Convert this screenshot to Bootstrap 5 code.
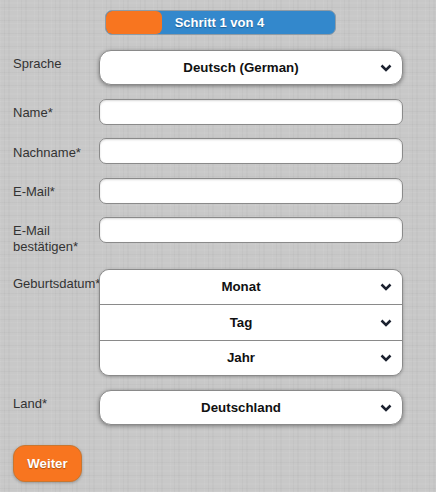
<!DOCTYPE html>
<html lang="de">
<head>
<meta charset="utf-8">
<title>Schritt 1 von 4</title>
<link href="https://cdn.jsdelivr.net/npm/bootstrap@5.3.0/dist/css/bootstrap.min.css" rel="stylesheet">
<style>
html,body{height:100%}
body{margin:0;font-family:"Liberation Sans",Arial,sans-serif;font-size:13px;color:#333;overflow:hidden;
 background-color:#c8c8c8;
 background-image:
  repeating-linear-gradient(0deg,rgba(255,255,255,.05) 0 1px,transparent 1px 3px,rgba(0,0,0,.025) 3px 4px,transparent 4px 7px,rgba(255,255,255,.04) 7px 9px,transparent 9px 13px),
  repeating-linear-gradient(90deg,rgba(255,255,255,.05) 0 1px,transparent 1px 4px,rgba(0,0,0,.025) 4px 5px,transparent 5px 8px,rgba(0,0,0,.02) 8px 10px,transparent 10px 17px);}
.wiz{padding:10px 33px 0 13px;height:492px}
.stepbar{width:231px;height:25px;margin:0 0 15px 92px;background:#3388cc;border:1px solid #8f9ba5;border-radius:7px;overflow:hidden;position:relative}
.stepfill{position:absolute;left:0;top:0;bottom:0;width:56px;background:#f8751f;border-radius:6px}
.steptext{position:relative;display:block;text-align:center;font-weight:700;font-size:13px;line-height:24px;color:#fff;text-shadow:0 1px 1px #1f5f94;padding-right:2px}
.frow{display:flex;align-items:flex-start}
.flabel{flex:0 0 86px;min-width:0;font-size:13px;line-height:18px;color:#333;white-space:nowrap}
.fctl{flex:0 0 304px}
.txtin{display:block;width:100%;height:26px;background:#fff;border:1px solid #8a8a8a;border-radius:7px;box-shadow:0 1px 2px rgba(0,0,0,.15) inset}
.selbtn{display:flex;align-items:center;justify-content:center;position:relative;width:100%;background:#fff;border:1px solid #8a8a8a;font-weight:700;font-size:13.3px;color:#111;padding-right:20px}
.selbtn svg{position:absolute;right:10px;top:50%;margin-top:-4px}
.solo{height:35px;border-radius:12px;box-shadow:0 1px 4px rgba(0,0,0,.4)}
.stack{border-radius:10px;overflow:hidden;border:1px solid #8a8a8a;box-shadow:0 1px 3px rgba(0,0,0,.25)}
.stack .selbtn{height:36px;border:0;border-top:1px solid #8a8a8a}
.stack .selbtn:first-child{border-top:0;height:34px}
.stack .selbtn:last-child{height:35px}
.gobtn{display:block;width:69px;height:37px;padding:0;margin-top:20px;background:#f8751f;border:1px solid #c9762f;border-radius:12px;color:#fff;font-weight:700;font-size:13.3px;line-height:35px;text-shadow:0 1px 1px #a8500f;box-shadow:0 1px 3px rgba(0,0,0,.25)}
.gap-a{margin-bottom:14px}.gap-b{margin-bottom:13px}.gap-c{margin-bottom:14px}.gap-d{margin-bottom:13px}.gap-e{margin-bottom:14px}.gap-f{margin-bottom:14px}
.lab-sel{padding-top:5px}.lab-txt{padding-top:5px}.lab-next{padding-top:6px}
.lab-two{padding-top:6px;line-height:16px;white-space:normal}
.lab-date{padding-top:6px}
</style>
</head>
<body>
<svg width="0" height="0" class="d-block" style="position:absolute" aria-hidden="true"><defs><symbol id="chev" viewBox="0 0 12 8"><path d="M1.5 1.5 6 6l4.500-4.500" fill="none" stroke="#1c2230" stroke-width="2.500"/></symbol></defs></svg>
<main class="wiz">
  <div class="stepbar"><div class="stepfill"></div><span class="steptext">Schritt 1 von 4</span></div>
  <div class="frow gap-a"><label class="flabel lab-sel">Sprache</label><div class="fctl"><div class="selbtn solo">Deutsch (German)<svg width="12" height="8"><use href="#chev"/></svg></div></div></div>
  <div class="frow gap-b"><label class="flabel lab-txt">Name*</label><div class="fctl"><input class="txtin" type="text"></div></div>
  <div class="frow gap-c"><label class="flabel lab-next">Nachname*</label><div class="fctl"><input class="txtin" type="text"></div></div>
  <div class="frow gap-d"><label class="flabel lab-txt">E-Mail*</label><div class="fctl"><input class="txtin" type="text"></div></div>
  <div class="frow gap-e"><label class="flabel lab-two">E-Mail bestätigen*</label><div class="fctl"><input class="txtin" type="text"></div></div>
  <div class="frow gap-f"><label class="flabel lab-date">Geburtsdatum*</label><div class="fctl"><div class="stack">
    <div class="selbtn">Monat<svg width="12" height="8"><use href="#chev"/></svg></div>
    <div class="selbtn">Tag<svg width="12" height="8"><use href="#chev"/></svg></div>
    <div class="selbtn">Jahr<svg width="12" height="8"><use href="#chev"/></svg></div>
  </div></div></div>
  <div class="frow"><label class="flabel lab-sel">Land*</label><div class="fctl"><div class="selbtn solo">Deutschland<svg width="12" height="8"><use href="#chev"/></svg></div></div></div>
  <button class="btn gobtn" type="button">Weiter</button>
</main>
<script src="https://cdn.jsdelivr.net/npm/bootstrap@5.3.0/dist/js/bootstrap.bundle.min.js"></script>
</body>
</html>
